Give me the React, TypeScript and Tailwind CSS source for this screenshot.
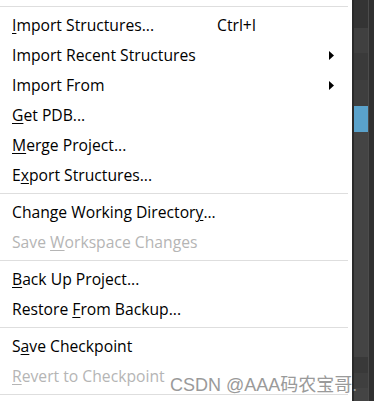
import React from 'react';

type Item = {
  label: string;
  u: number; // mnemonic index, -1 for none
  shortcut?: string;
  submenu?: boolean;
  disabled?: boolean;
};

const groups: Item[][] = [
  [
    { label: 'Import Structures...', u: 0, shortcut: 'Ctrl+I' },
    { label: 'Import Recent Structures', u: -1, submenu: true },
    { label: 'Import From', u: -1, submenu: true },
    { label: 'Get PDB...', u: 0 },
    { label: 'Merge Project...', u: 0 },
    { label: 'Export Structures...', u: 1 },
  ],
  [
    { label: 'Change Working Directory...', u: 23 },
    { label: 'Save Workspace Changes', u: 5, disabled: true },
  ],
  [
    { label: 'Back Up Project...', u: 0 },
    { label: 'Restore From Backup...', u: 8 },
  ],
  [
    { label: 'Save Checkpoint', u: 1 },
    { label: 'Revert to Checkpoint', u: 0, disabled: true },
  ],
];

const Separator = () => (
  <div className="h-[7px] flex items-center pr-[4px]">
    <div className="h-px w-full bg-[#dedede]" />
  </div>
);

const Label = ({ text, u }: { text: string; u: number }) => {
  if (u < 0) return <>{text}</>;
  return (
    <>
      {text.slice(0, u)}
      <span className="underline underline-offset-[2px] decoration-1">{text[u]}</span>
      {text.slice(u + 1)}
    </>
  );
};

const MenuRow = ({ item }: { item: Item }) => (
  <div
    className={`h-[30px] flex items-center pl-[12px] pr-[18px] whitespace-nowrap ${
      item.disabled ? 'text-[#b5b5b5]' : 'text-black'
    }`}
  >
    <span className="min-w-[205px]">
      <Label text={item.label} u={item.u} />
    </span>
    {item.shortcut && <span>{item.shortcut}</span>}
    {item.submenu && (
      <svg className="ml-auto" width="5" height="9" viewBox="0 0 5 9">
        <path d="M0 0 L5 4.5 L0 9 Z" fill="#000" />
      </svg>
    )}
  </div>
);

const SideStrip = () => (
  <div className="flex-1 flex bg-[#2c2c2c]">
    <div className="w-[2px] bg-[#2a2a2a]" />
    <div className="flex-1 flex flex-col">
      <div className="h-[28px] bg-[#343434]" />
      <div className="h-[25px] bg-[#404040]" />
      <div className="h-[27px] bg-[#3a3a3a]" />
      <div className="h-[26px] bg-[#3e3e3e]" />
      <div className="h-[26px] bg-[#5aa2cb]" />
      <div className="h-[225px] bg-[#444444]" />
      <div className="h-[16px] bg-[#393939]" />
      <div className="h-[15px] bg-[#3f3f3f]" />
      <div className="flex-1 bg-[#444444]" />
    </div>
    <div className="w-px bg-[#4c4c4c]" />
    <div className="w-[5px] bg-[#303030]" />
  </div>
);

export default function App() {
  return (
    <div
      className="relative w-[374px] h-[401px] flex overflow-hidden bg-white text-[15.7px] leading-[30px]"
      style={{ fontFamily: '"Open Sans", "Noto Sans", sans-serif' }}
    >
      <div className="w-[352px] bg-white pt-[3px]">
        <Separator />
        {groups.map((g, gi) => (
          <div key={gi}>
            {g.map((item) => (
              <MenuRow key={item.label} item={item} />
            ))}
            <Separator />
          </div>
        ))}
      </div>
      <SideStrip />
      <div
        className="absolute left-[170px] top-[373px] text-[18px] leading-[24px] text-[#9a9a9a] whitespace-nowrap pointer-events-none"
        style={{ fontFamily: '"Liberation Sans", "Noto Sans CJK SC", sans-serif' }}
      >
        CSDN @AAA码农宝哥.
      </div>
    </div>
  );
}
